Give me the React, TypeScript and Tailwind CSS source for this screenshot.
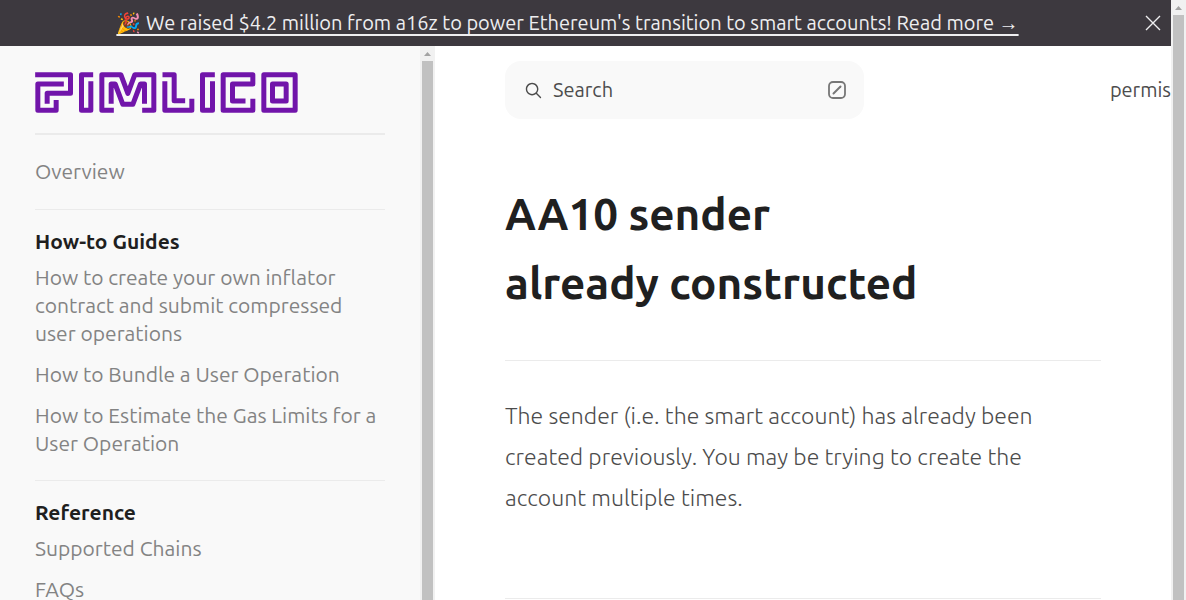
import type { ReactNode } from "react";

function Logo() {
  return (
    <svg viewBox="0 0 788 123" className="h-[41px] w-[263px]" fill="none" stroke="#7115AA" strokeWidth="15" strokeLinejoin="round" role="img" aria-label="Pimlico">
      <path d="M0 8H106V64H36V95M86 36H8V115H63V84" />
      <path d="M174 8H139V115H167V28" />
      <path d="M236 115H200V8H257L278 64L299 8H356V115H321M228 95V36H240L263 97H293L316 36H328V95" />
      <path d="M382 8H417V86H450M389 28V115H470V80" />
      <path d="M539 8H502V115H532V28" />
      <path d="M631 87H592V36H653V8H564V115H653V80" />
      <path d="M686 8H780V115H686ZM712 36H753V87H712Z" />
    </svg>
  );
}

function Scrollbar() {
  return (
    <div aria-hidden="true" className="flex w-[15px] shrink-0 flex-col items-center bg-[#f1f1f1]">
      <svg viewBox="0 0 15 15" className="h-[15px] w-[15px] shrink-0" fill="#a3a3a3">
        <path d="M4 10L7.5 6L11 10Z" />
      </svg>
      <div className="w-[11px] grow bg-[#c1c1c1]" />
    </div>
  );
}

function NavLink({ children }: { children: ReactNode }) {
  return (
    <li>
      <a href="#" className="block text-[21px] leading-7 text-[#838383]">
        {children}
      </a>
    </li>
  );
}

function NavSection({ title, items }: { title: string; items: string[] }) {
  return (
    <section className="border-t border-[#ebebeb] pt-[17px] pb-[23px]">
      <h2 className="text-[21px] leading-7 font-semibold text-[#1f1f1f]">{title}</h2>
      <ul className="mt-2 flex flex-col gap-[13px]">
        {items.map((item) => (
          <NavLink key={item}>{item}</NavLink>
        ))}
      </ul>
    </section>
  );
}

export default function App() {
  return (
    <div className="flex h-screen overflow-hidden bg-white font-['Ubuntu','Noto_Sans',sans-serif]">
      <div className="flex min-w-0 grow flex-col">
        <div className="flex h-[46px] shrink-0 items-center bg-[#3d393f] pr-2">
          <p className="grow pr-2 text-center text-[20px] font-[450] text-[#eeeef0]">
            <a href="#" className="whitespace-nowrap underline decoration-2 underline-offset-4">
              🎉 We raised $4.2 million from a16z to power Ethereum's transition to smart accounts! Read more →
            </a>
          </p>
          <button type="button" aria-label="Close" className="flex h-5 w-5 items-center justify-center">
            <svg viewBox="0 0 16 16" className="h-4 w-4" stroke="#eeeef0" strokeWidth="1.4">
              <path d="M1 1L15 15M15 1L1 15" />
            </svg>
          </button>
        </div>
        <div className="flex min-h-0 grow">
          <aside className="flex w-[435px] shrink-0 overflow-hidden bg-[#f9f9f9]">
            <nav className="min-w-0 grow px-[35px] pt-[26px]">
              <a href="#" className="block border-b-2 border-[#ebebeb] pb-5">
                <Logo />
              </a>
              <ul className="pt-[22px] pb-6">
                <NavLink>Overview</NavLink>
              </ul>
              <NavSection
                title="How-to Guides"
                items={[
                  "How to create your own inflator contract and submit compressed user operations",
                  "How to Bundle a User Operation",
                  "How to Estimate the Gas Limits for a User Operation",
                ]}
              />
              <NavSection title="Reference" items={["Supported Chains", "FAQs"]} />
            </nav>
            <Scrollbar />
          </aside>
          <div className="min-w-0 grow overflow-hidden pt-[15px] pl-[70px]">
            <header className="flex items-center justify-between">
              <button type="button" className="flex h-[58px] w-[359px] items-center rounded-2xl bg-[#f9f9f9] px-[18px] text-[#4c4c4c]">
                <svg viewBox="0 0 15 15" className="h-[21px] w-[21px]" fill="currentColor">
                  <path fillRule="evenodd" clipRule="evenodd" d="M10 6.5C10 8.433 8.433 10 6.5 10C4.567 10 3 8.433 3 6.5C3 4.567 4.567 3 6.5 3C8.433 3 10 4.567 10 6.5ZM9.309 10.016C8.538 10.631 7.562 11 6.5 11C4.015 11 2 8.985 2 6.5C2 4.015 4.015 2 6.5 2C8.985 2 11 4.015 11 6.5C11 7.562 10.631 8.538 10.016 9.309L12.854 12.146C13.049 12.342 13.049 12.658 12.854 12.854C12.658 13.049 12.342 13.049 12.146 12.854L9.309 10.016Z" />
                </svg>
                <span className="ml-[9px] grow text-left text-[20px] font-[450]">Search</span>
                <svg viewBox="0 0 18 18" className="h-[18px] w-[18px]" fill="none" stroke="#777777" strokeWidth="2" strokeLinecap="round">
                  <rect x="1" y="1" width="16" height="16" rx="4" strokeWidth="1.8" />
                  <path d="M5.5 12.5L12.5 5.5" />
                </svg>
              </button>
              <a href="#" className="text-[20px] font-[450] text-[#4c4c4c]">
                permis
              </a>
            </header>
            <main className="pt-[60px] pr-[70px]">
              <h1 className="max-w-[420px] text-[44px] leading-[69px] font-semibold text-[#202020]">AA10 sender already constructed</h1>
              <p className="mt-[43px] border-y border-[#ebebeb] pt-[34px] pb-20 text-[23px] leading-[41px] font-light text-[#4c4c4c]">
                The sender (i.e. the smart account) has already been created previously. You may be trying to create the account multiple times.
              </p>
            </main>
          </div>
        </div>
      </div>
      <Scrollbar />
    </div>
  );
}
